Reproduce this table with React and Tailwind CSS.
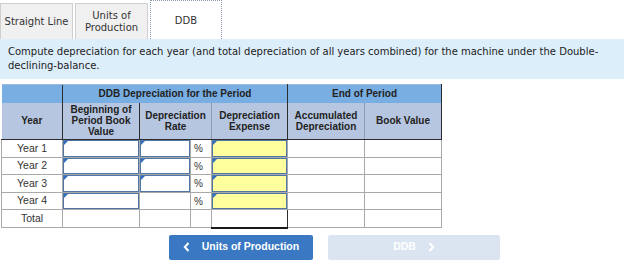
import { useState } from 'react';

const years = ['Year 1', 'Year 2', 'Year 3', 'Year 4'];

// little blue flag shown at the top-left of an editable cell
const EntryField = ({ yellow = false }) => (
  <div
    className={`relative h-full w-full border border-[#4f77a6] ${
      yellow ? 'bg-[#ffff9e]' : 'bg-white'
    }`}
  >
    <span className="absolute left-0 top-0 h-0 w-0 border-l-[4px] border-l-[#2f6fc0] border-b-[4px] border-b-transparent" />
  </div>
);

const Chevron = ({ left = false }) => (
  <svg width="7" height="10" viewBox="0 0 7 10" fill="none">
    <path
      d={left ? 'M5.5 1 L1.8 5 L5.5 9' : 'M1.5 1 L5.2 5 L1.5 9'}
      stroke="currentColor"
      strokeWidth="2"
    />
  </svg>
);

const DdbSchedule = () => {
  const [tab] = useState('ddb');

  const tabs = [
    { id: 'sl', label: 'Straight Line' },
    { id: 'uop', label: 'Units of Production' },
    { id: 'ddb', label: 'DDB' },
  ];

  const cell = 'border border-[#a9a9a9] p-0';
  const head = 'text-[10px] font-bold leading-[11px] text-[#222] text-center';

  return (
    <div className="h-[264px] w-[624px] overflow-hidden bg-white font-['Liberation_Sans',Arial,sans-serif]">
      {/* tabs */}
      <div className="flex h-[39px] items-end gap-[2px] font-['DejaVu_Sans',Verdana,sans-serif] text-[10px] text-[#333]">
        {tabs.map(t =>
          t.id === tab ? (
            <div
              key={t.id}
              className="flex h-[39px] w-[72px] items-center justify-center border border-dotted border-b-0 border-[#8c9bb0] bg-white"
            >
              {t.label}
            </div>
          ) : (
            <div
              key={t.id}
              className="flex h-[36px] w-[73px] items-center justify-center border border-b-0 border-[#cfcfcf] bg-[#f0f0f0] text-center leading-[12px]"
            >
              {t.id === 'uop' ? (
                <span>
                  Units of
                  <br />
                  Production
                </span>
              ) : (
                t.label
              )}
            </div>
          )
        )}
      </div>

      {/* instructions */}
      <div className="h-[40px] bg-[#ddeefb] px-[8px] pt-[6px] font-['DejaVu_Sans',Verdana,sans-serif] text-[10px] leading-[14px] text-[#222]">
        Compute depreciation for each year (and total depreciation of all years combined) for the machine under the Double-declining-balance.
      </div>

      {/* schedule */}
      <table className="ml-[1px] mt-[5px] table-fixed border-collapse">
        <colgroup>
          <col className="w-[61px]" />
          <col className="w-[77px]" />
          <col className="w-[51px]" />
          <col className="w-[21px]" />
          <col className="w-[76px]" />
          <col className="w-[77px]" />
          <col className="w-[77px]" />
        </colgroup>
        <thead>
          <tr className="h-[18px] bg-[#79aee3]">
            <th className="border-t border-[#9bbbe0] p-0" />
            <th colSpan={4} className={`${head} border-x border-x-[#2d2d2d] border-t border-t-[#9bbbe0] p-0`}>
              DDB Depreciation for the Period
            </th>
            <th colSpan={2} className={`${head} border-r border-r-[#2d2d2d] border-t border-t-[#9bbbe0] p-0`}>
              End of Period
            </th>
          </tr>
          <tr className="h-[37px] bg-[#b6c6e0]">
            <th className={`${head} border-b border-b-[#2d2d2d] p-0`}>Year</th>
            <th className={`${head} border-x border-x-[#2d2d2d] border-b border-b-[#2d2d2d] p-0`}>
              Beginning of
              <br />
              Period Book
              <br />
              Value
            </th>
            <th colSpan={2} className={`${head} border-r border-r-[#8f9bb0] border-b border-b-[#2d2d2d] p-0`}>
              Depreciation
              <br />
              Rate
            </th>
            <th className={`${head} border-r border-r-[#2d2d2d] border-b border-b-[#2d2d2d] p-0`}>
              Depreciation
              <br />
              Expense
            </th>
            <th className={`${head} border-r border-r-[#8f9bb0] border-b border-b-[#2d2d2d] p-0`}>
              Accumulated
              <br />
              Depreciation
            </th>
            <th className={`${head} border-r border-r-[#2d2d2d] border-b border-b-[#2d2d2d] p-0`}>Book Value</th>
          </tr>
        </thead>
        <tbody className="text-[10.5px] text-[#333]">
          {years.map((y, i) => (
            <tr key={y} className={i % 2 === 0 ? 'h-[18px]' : 'h-[17px]'}>
              <td className={`${cell} text-center`}>{y}</td>
              <td className={`${cell} h-[1px]`}>
                <EntryField />
              </td>
              <td className={`${cell} h-[1px]`}>{i < 3 && <EntryField />}</td>
              <td className={`${cell} pl-[3px] text-[10px]`}>%</td>
              <td className={`${cell} h-[1px]`}>
                <EntryField yellow />
              </td>
              <td className={cell} />
              <td className={cell} />
            </tr>
          ))}
          <tr className="h-[18px]">
            <td className={`${cell} text-center`}>Total</td>
            <td className={cell} />
            <td className={cell} />
            <td className={cell} />
            <td className="border border-[#a9a9a9] border-x-[#2d2d2d] border-b-2 border-b-[#1a1a1a] p-0" />
            <td className={cell} />
            <td className={cell} />
          </tr>
        </tbody>
      </table>

      {/* navigation */}
      <div className="ml-[169px] mt-[6px] flex gap-[15px]">
        <button className="flex h-[25px] w-[144px] items-center justify-center gap-[12px] rounded-[2px] bg-[#3a78c3] text-[10.5px] font-bold text-white">
          <Chevron left />
          <span>Units of Production</span>
        </button>
        <button className="flex h-[25px] w-[172px] items-center justify-center gap-[12px] rounded-[2px] bg-[#dbe5f1] text-[10.5px] font-bold text-white">
          <span>DDB</span>
          <Chevron />
        </button>
      </div>
    </div>
  );
};

export default function App() {
  return <DdbSchedule />;
}
